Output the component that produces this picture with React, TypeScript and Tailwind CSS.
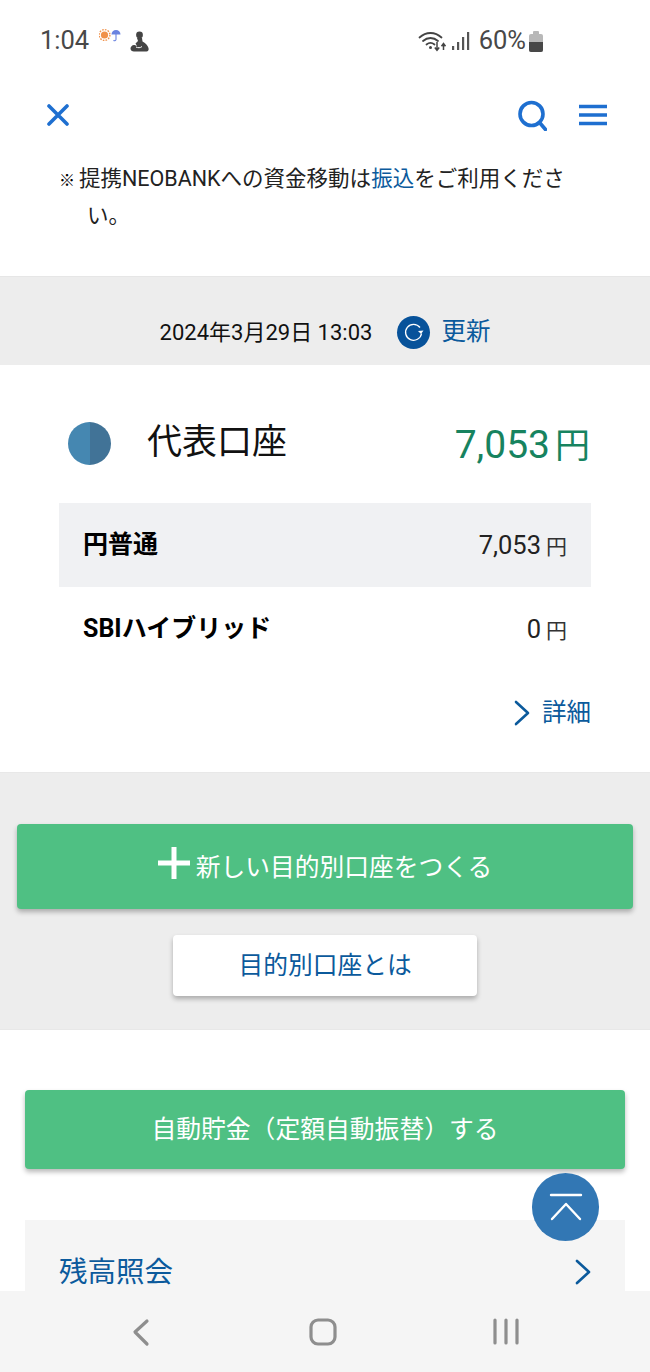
const font = "font-['Roboto','Noto_Sans_CJK_JP',sans-serif]";

function Chevron({ className }: { className?: string }) {
  return (
    <svg width="16" height="26" viewBox="0 0 16 26" fill="none" stroke="currentColor" strokeWidth="2.600" strokeLinecap="round" strokeLinejoin="round" className={className}>
      <path d="M2 2l12 11L2 24" />
    </svg>
  );
}

function StatusBar() {
  return (
    <div className="h-[80px] pt-[2px] flex items-center justify-between pl-[40px] pr-[107px] text-[#484848]">
      <div className="flex items-center">
        <span className="text-[25.500px] leading-none">1:04</span>
        <svg width="22" height="16" viewBox="0 0 22 16" className="ml-[10px] mb-[10px]">
          <circle cx="5.500" cy="7" r="3.600" fill="#f0914a" />
          <circle cx="5.500" cy="7" r="5.400" fill="none" stroke="#f0914a" strokeWidth="1.400" strokeDasharray="1.600 1.200" />
          <path d="M12.500 6.500a4.500 4.500 0 0 1 9 0z" fill="#6a83e0" />
          <path d="M17 6v5.500a1.300 1.300 0 0 1-2.400.6" fill="none" stroke="#6a83e0" strokeWidth="1.100" />
        </svg>
        <svg width="20" height="21" viewBox="0 0 20 21" className="ml-[9px]">
          <circle cx="9.500" cy="4" r="3.400" fill="#444" />
          <path d="M7 7h5l.5 3.500c3 1.500 5 3.500 6 6.500.6 2-.5 3.500-2 3.500H4c-2 0-3.500-1.200-3.500-3S2.500 13.500 4.500 14L7 15 5.500 12.500 8 10z" fill="#444" />
          <path d="M6 16c1.800 1 4.500 1 6-.5" stroke="#fff" strokeWidth="1" fill="none" />
        </svg>
      </div>
      <div className="flex items-center">
        <svg width="30" height="24" viewBox="0 0 30 24">
          <path d="M1.500 8.500c6.500-6 15.500-6 22 0" fill="none" stroke="#444" strokeWidth="1.800" strokeLinecap="round" />
          <path d="M5 12c4.500-4 10.500-4 15 0" fill="none" stroke="#444" strokeWidth="1.800" strokeLinecap="round" />
          <path d="M8.500 15.500c2.500-2 5.500-2 8 0" fill="none" stroke="#444" strokeWidth="1.800" strokeLinecap="round" />
          <circle cx="12.500" cy="18.500" r="1.500" fill="#444" />
          <path d="M19 13v8m-2.200-2.500 2.200 2.800 2.200-2.800M25.500 21v-6m-2 2.200 2-2.600 2 2.600" fill="none" stroke="#444" strokeWidth="1.500" />
        </svg>
        <svg width="20" height="22" viewBox="0 0 20 22" className="ml-[3px]">
          <rect x="1" y="16" width="2.200" height="4" fill="#555" />
          <rect x="6" y="12" width="2.200" height="8" fill="#555" />
          <rect x="11" y="7" width="2.200" height="13" fill="#555" />
          <rect x="16" y="2" width="2.200" height="18" fill="#555" />
        </svg>
        <span className="text-[25.500px] leading-none ml-[8px]">60%</span>
        <div className="ml-[3px] w-[14px] h-[21px] flex flex-col items-center">
          <div className="w-[6px] h-[3px] bg-[#b8b8b8] rounded-t-[1px]" />
          <div className="w-[14px] h-[18px] rounded-[2px] bg-[#b8b8b8] flex flex-col justify-end overflow-hidden">
            <div className="h-[10px] bg-[#484848]" />
          </div>
        </div>
      </div>
    </div>
  );
}

function Header() {
  return (
    <div className="h-[70px] flex items-center justify-between pl-[47px] pr-[43px] text-[#1e6fd0]">
      <svg width="22" height="22" viewBox="0 0 22 22" fill="none" stroke="currentColor" strokeWidth="3.600" strokeLinecap="round">
        <path d="M2 2l18 18M20 2 2 20" />
      </svg>
      <div className="flex items-center gap-[32px]">
        <svg width="29" height="31" viewBox="0 0 29 31" fill="none" stroke="currentColor" strokeWidth="3.600">
          <circle cx="13.500" cy="14" r="11.500" />
          <path d="m21.500 22.500 6 7" strokeLinecap="round" />
        </svg>
        <svg width="28" height="22" viewBox="0 0 28 22" fill="none" stroke="currentColor" strokeWidth="3.600">
          <path d="M0 2.500h28M0 11h28M0 19.500h28" />
        </svg>
      </div>
    </div>
  );
}

function AccountRow({ label, amount, shaded }: { label: string; amount: string; shaded?: boolean }) {
  return (
    <div className={`h-[84px] px-[24px] flex items-center justify-between ${shaded ? "bg-[#f0f1f3]" : ""}`}>
      <span className="text-[25px] font-bold text-black">{label}</span>
      <span className="text-[25.500px] text-[#222]">
        {amount}
        <span className="text-[21px] ml-[5px] text-[#333]">円</span>
      </span>
    </div>
  );
}

export default function App() {
  return (
    <div className={`${font} relative w-[650px] h-[1372px] overflow-hidden bg-white`}>
      <StatusBar />
      <Header />

      {/* 注意書き */}
      <div className="h-[126px] pt-[10px] pl-[59px] pr-[70px] text-[21.500px] leading-[37px] text-[#222]">
        <p className="pl-[28px] [text-indent:-28px]">
          <span className="text-[16px] leading-none mr-[4px] text-black">※</span>
          提携NEOBANKへの資金移動は<span className="text-[#0b5a9c]">振込</span>をご利用ください。
        </p>
      </div>

      {/* 更新 */}
      <div className="h-[89px] bg-[#ededed] border-t border-[#e6e6e6] pt-[22px] flex items-center justify-center">
        <span className="text-[22px] text-[#111]">2024年3月29日 13:03</span>
        <div className="ml-[25px] w-[33px] h-[33px] rounded-full bg-[#07529a] flex items-center justify-center">
          <svg width="22" height="22" viewBox="0 0 22 22">
            <path d="M17 6.500a8 8 0 1 0 1.500 6" fill="none" stroke="#fff" strokeWidth="1.300" />
            <path d="M20.500 9.500l-2.500 3.500-3-3z" fill="#fff" />
          </svg>
        </div>
        <span className="ml-[11px] text-[24.500px] text-[#0b5a9c]">更新</span>
      </div>

      {/* 代表口座 */}
      <div className="h-[407px] px-[59px] pt-[45px]">
        <div className="h-[93px] flex items-start justify-between">
          <div className="flex items-start">
            <div className="w-[43px] h-[43px] mt-[12px] ml-[9px] rounded-full overflow-hidden flex">
              <div className="w-1/2 bg-[#4587b1]" />
              <div className="w-1/2 bg-[#417397]" />
            </div>
            <span className="ml-[36px] mt-[3px] text-[35px] leading-[60px] text-[#111]">代表口座</span>
          </div>
          <span className="text-[#17835f] text-[39px] leading-[70px] mr-[1px]">
            7,053<span className="text-[35px] ml-[5px]">円</span>
          </span>
        </div>
        <AccountRow label="円普通" amount="7,053" shaded />
        <AccountRow label="SBIハイブリッド" amount="0" />
        <div className="flex items-center justify-end h-[84px] text-[#0b5a9c]">
          <Chevron className="mr-[12px]" />
          <span className="text-[24.500px]">詳細</span>
        </div>
      </div>

      {/* 目的別口座 */}
      <div className="h-[258px] bg-[#ededed] border-t border-[#e8e8e8] border-b pt-[51px] px-[17px] flex flex-col items-center">
        <button className="w-full h-[85px] rounded-[4px] bg-[#4fc083] text-white flex items-center justify-center shadow-[0_3px_5px_rgba(0,0,0,0.28)]">
          <svg width="32" height="32" viewBox="0 0 32 32" fill="#fff" className="-mt-[8px] shrink-0">
            <rect x="13.500" y="0" width="5" height="32" />
            <rect x="0" y="13.500" width="32" height="5" />
          </svg>
          <span className="text-[24.750px] ml-[6px] mt-[3px]">新しい目的別口座をつくる</span>
        </button>
        <button className="mt-[26px] w-[304px] h-[61px] pt-[1px] rounded-[4px] bg-white text-[#0b5a9c] text-[24.750px] shadow-[0_3px_5px_rgba(0,0,0,0.28)]">
          目的別口座とは
        </button>
      </div>

      {/* 自動貯金 */}
      <div className="px-[25px] pt-[60px]">
        <button className="w-full h-[79px] rounded-[4px] bg-[#4fc083] text-white text-[24.800px] shadow-[0_3px_5px_rgba(0,0,0,0.28)]">
          自動貯金（定額自動振替）する
        </button>
        <div className="mt-[51px] h-[110px] bg-[#f5f5f5] pl-[34px] pr-[34px] pt-[25px] flex items-start justify-between text-[#0b5a9c]">
          <span className="text-[28.500px] leading-[54px] mt-[1px]">残高照会</span>
          <Chevron className="mt-[14px]" />
        </div>
      </div>

      {/* ページトップ */}
      <div className="absolute left-[532px] top-[1173px] w-[67px] h-[68px] rounded-full bg-[#3277b4] flex items-center justify-center">
        <svg width="36" height="30" viewBox="0 0 36 30" fill="none" stroke="#fff" strokeWidth="2.400" strokeLinecap="round" strokeLinejoin="round">
          <path d="M3 3h30" />
          <path d="M4 27 18 12l14 15" />
        </svg>
      </div>

      {/* ナビゲーションバー */}
      <div className="absolute left-0 right-0 bottom-0 h-[81px] bg-[#f5f5f5] text-[#8e8e8e]">
        <svg width="650" height="81" viewBox="0 0 650 81" fill="none" stroke="currentColor" strokeLinecap="round" strokeLinejoin="round" strokeWidth="3.200">
          <path d="M147 30 135 41l12 12" />
          <rect x="311" y="29" width="24" height="24" rx="7" />
          <path d="M495 29v23M506 29v23M517 29v23" />
        </svg>
      </div>
    </div>
  );
}
